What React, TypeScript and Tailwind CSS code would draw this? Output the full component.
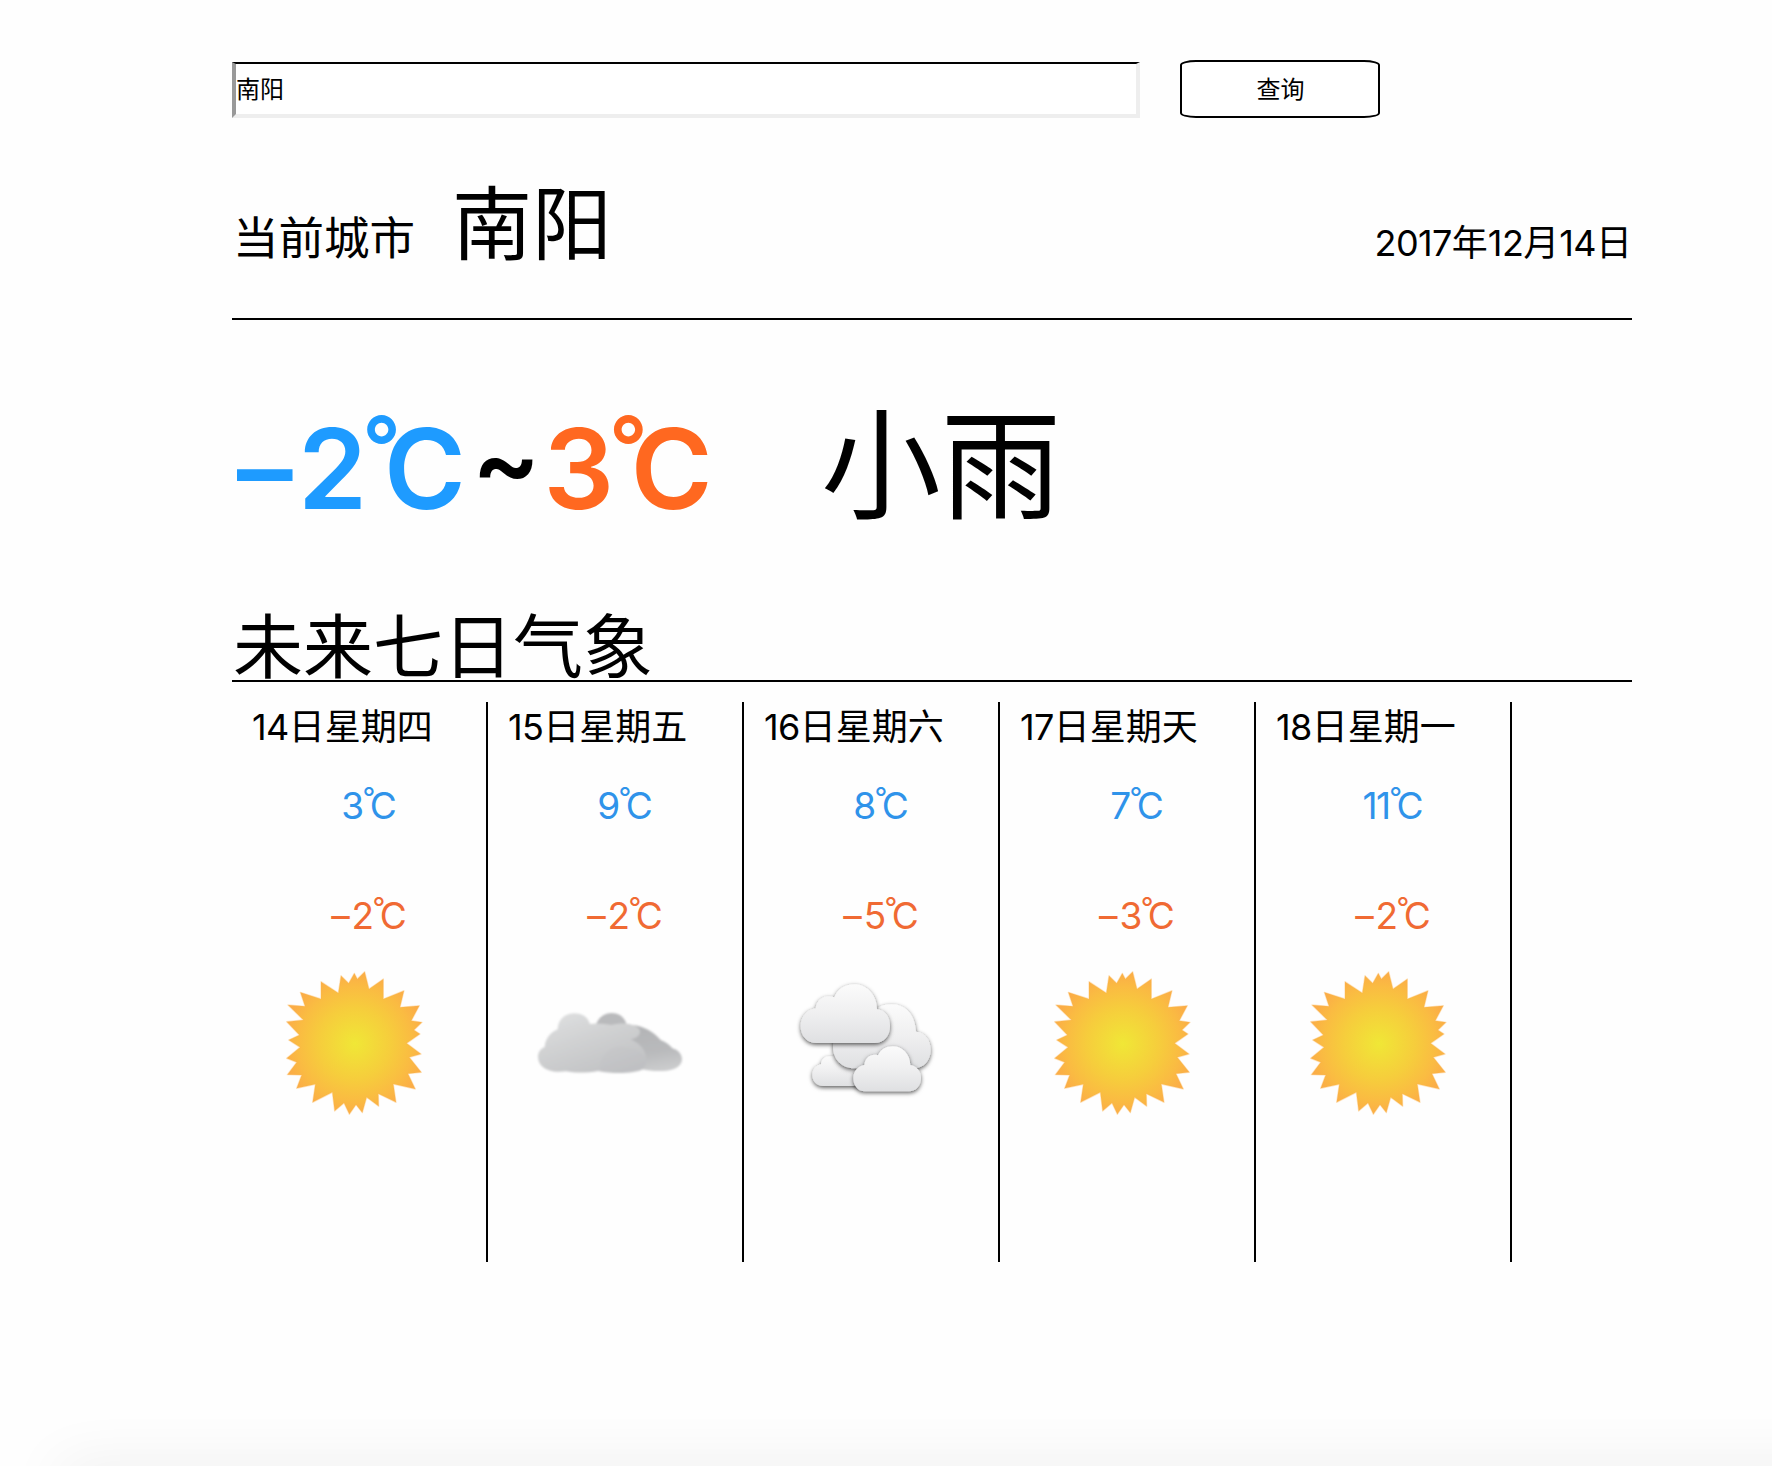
import React from 'react';

type Sky = 'sun' | 'cloudy' | 'overcast';

interface Day {
  date: string;
  week: string;
  high: string;
  low: string;
  sky: Sky;
}

const days: Day[] = [
  { date: '14', week: '日星期四', high: '3', low: '–2', sky: 'sun' },
  { date: '15', week: '日星期五', high: '9', low: '–2', sky: 'cloudy' },
  { date: '16', week: '日星期六', high: '8', low: '–5', sky: 'overcast' },
  { date: '17', week: '日星期天', high: '7', low: '–3', sky: 'sun' },
  { date: '18', week: '日星期一', high: '11', low: '–2', sky: 'sun' },
];

function Celsius({ value }: { value: string }) {
  const negative = value.startsWith('–');
  const digits = negative ? value.slice(1) : value;
  return (
    <>
      {negative && <span className="tracking-[0.05em]">–</span>}
      <span className="tracking-[-0.045em]">{digits}</span>
      <span className="inline-block -translate-y-[0.38em] text-[0.76em] leading-none tracking-[-0.2em]">°</span>
      <span>C</span>
    </>
  );
}

function SunIcon({ id }: { id: string }) {
  return (
    <svg viewBox="0 0 540 540" className="block h-[180px] w-[180px]">
      <defs>
        <radialGradient id={id} gradientUnits="userSpaceOnUse" cx="255" cy="284" r="215">
          <stop offset="0" stopColor="#f0e736" />
          <stop offset="0.5" stopColor="#f6cd3c" />
          <stop offset="0.8" stopColor="#fabb42" />
          <stop offset="1" stopColor="#fbac47" />
        </radialGradient>
      </defs>
      <path
        transform="translate(18 0)"
        fill={`url(#${id})`}
        stroke="#fbb450"
        strokeOpacity="0.35"
        strokeWidth="4"
        strokeLinejoin="round"
        d="M284 68L297 120L340 90L340 150L402 125L390 175L448 170L424 215L456 220L432 243L450 255L410 283L453 315L418 325L454 370L414 374L436 420L370 405L378 460L325 434L326 472L290 445L277 491L258 467L238 496L222 462L194 486L187 430L128 460L136 406L80 418L95 378L52 377L80 340L50 328L90 295L56 273L88 258L50 218L100 213L54 168L105 172L91 130L153 150L153 98L205 132L213 80L236 103L253 73L262 90Z"
      />
    </svg>
  );
}

function CloudyIcon({ id }: { id: string }) {
  return (
    <svg viewBox="0 0 540 540" className="block h-[180px] w-[180px]">
      <defs>
        <linearGradient id={`${id}-front`} x1="0.1" y1="0" x2="0.75" y2="1">
          <stop offset="0" stopColor="#dfe0e1" />
          <stop offset="0.45" stopColor="#d0d1d2" />
          <stop offset="1" stopColor="#c0c1c3" />
        </linearGradient>
        <linearGradient id={`${id}-back`} x1="0.3" y1="0" x2="0.5" y2="1">
          <stop offset="0" stopColor="#b3b4b6" />
          <stop offset="0.6" stopColor="#b9babc" />
          <stop offset="1" stopColor="#cbcccd" />
        </linearGradient>
        <filter id={`${id}-soft`} x="-5%" y="-5%" width="110%" height="110%">
          <feGaussianBlur stdDeviation="2.5" />
        </filter>
      </defs>
      <g transform="translate(0 91)" filter={`url(#${id}-soft)`}>
        <path fill="#b9babc" d="M228 134C238 112 254 101 275 101C296 101 312 112 319 132L300 150L240 150Z" />
        <path
          fill={`url(#${id}-back)`}
          d="M320 140C355 130 400 155 422 182C438 188 450 197 457 207C474 211 486 225 486 240C486 262 460 276 425 275C405 276 380 272 360 268L330 180Z"
        />
        <path
          fill={`url(#${id}-front)`}
          d="M54 232C54 218 62 208 74 203C76 178 92 158 113 150C114 120 136 102 163 102C187 102 204 114 210 134C232 130 255 134 275 137C305 128 345 132 358 150C365 165 352 178 332 180C362 194 378 214 378 235C380 252 378 262 368 270C345 283 280 285 235 275C200 281 165 281 138 276C95 282 54 268 54 232Z"
        />
        <path fill="#bebfc1" fillOpacity="0.2" d="M240 275C238 235 262 208 290 203C325 200 372 215 378 240C380 275 300 287 240 275Z" />
      </g>
    </svg>
  );
}

function OvercastIcon({ id }: { id: string }) {
  return (
    <svg viewBox="0 0 540 540" className="block h-[180px] w-[180px]">
      <defs>
        <linearGradient id={`${id}-fill`} x1="0" y1="0" x2="0" y2="1">
          <stop offset="0" stopColor="#fbfbfb" />
          <stop offset="0.5" stopColor="#efeff0" />
          <stop offset="1" stopColor="#dfe0e2" />
        </linearGradient>
        <filter id={`${id}-shadow`} x="-15%" y="-15%" width="130%" height="140%">
          <feDropShadow dx="0" dy="5" stdDeviation="7" floodColor="#000000" floodOpacity="0.65" />
        </filter>
      </defs>
      <g transform="translate(12 33)" fill={`url(#${id}-fill)`}>
        <path
          filter={`url(#${id}-shadow)`}
          d="M130 378C108 378 97 362 97 345C97 328 108 316 123 313C124 298 134 289 148 289C180 285 215 310 240 345L240 378Z"
        />
        <path
          filter={`url(#${id}-shadow)`}
          d="M222 325C185 325 160 298 159 262C159 230 175 205 265 190C268 155 295 133 335 133C378 133 405 165 408 215C435 217 452 240 452 270C452 300 432 325 402 325Z"
        />
        <path
          filter={`url(#${id}-shadow)`}
          d="M110 249C80 249 62 227 62 198C62 170 82 148 107 145C110 118 135 102 163 112C172 88 195 73 222 73C262 73 290 105 291 148C315 150 330 170 330 198C330 228 312 249 284 249Z"
        />
        <path
          filter={`url(#${id}-shadow)`}
          d="M255 394C232 394 220 375 220 354C220 333 234 318 253 315C255 293 273 280 294 286C302 268 318 259 338 259C367 259 390 282 391 315C410 318 423 333 423 354C423 377 408 394 387 394Z"
        />
      </g>
    </svg>
  );
}

function SkyIcon({ sky, id }: { sky: Sky; id: string }) {
  if (sky === 'sun') return <SunIcon id={id} />;
  if (sky === 'cloudy') return <CloudyIcon id={id} />;
  return <OvercastIcon id={id} />;
}

function DayColumn({ day, index }: { day: Day; index: number }) {
  return (
    <li className="h-[560px] w-64 border-r-2 border-black pl-5">
      <div className="h-[50px] whitespace-nowrap text-4xl leading-[50px]">
        <span className="tracking-[-0.6px]">{day.date}</span>
        {day.week}
      </div>
      <div className="mt-[29px] h-[50px] text-center text-[37px] leading-[50px] text-[#2f93ea]">
        <Celsius value={day.high} />
      </div>
      <div className="mt-[60px] h-[50px] text-center text-[37px] leading-[50px] text-[#f06a33]">
        <Celsius value={day.low} />
      </div>
      <div className="ml-3 mt-2">
        <SkyIcon sky={day.sky} id={`sky-${index}`} />
      </div>
    </li>
  );
}

export default function App() {
  return (
    <div className="relative h-[1466px] w-full overflow-hidden bg-[#fefefe] font-['Inter','Noto_Sans_CJK_SC',sans-serif] text-black">
      <main className="ml-[232px] w-[1400px] pt-[60px]">
        <form className="flex h-[58px] items-end gap-10" onSubmit={(e) => e.preventDefault()}>
          <input
            type="text"
            defaultValue="南阳"
            className="h-14 w-[908px] border-4 border-t-2 border-b-[#eeeeee] border-l-[#999999] border-r-[#eeeeee] border-t-black bg-white pb-[3px] text-2xl leading-none outline-none"
          />
          <button type="submit" className="h-[58px] w-[200px] rounded-[16px/5px] border-2 border-black bg-white pl-px pt-0.5 text-2xl leading-none">
            查询
          </button>
        </form>

        <header className="flex h-[202px] items-baseline border-b-2 border-black pt-[48px]">
          <span className="w-[180px] translate-y-0.5 whitespace-nowrap pl-px text-[45.5px] leading-[64px]">当前城市</span>
          <span className="ml-10 text-[80px] leading-[116px]">南阳</span>
          <time className="ml-auto translate-y-[3px] text-4xl leading-[50px]">
            <span className="tracking-[-0.6px]">2017</span>年<span className="tracking-[-0.6px]">12</span>月
            <span className="tracking-[-0.6px]">14</span>日
          </time>
        </header>

        <section className="flex h-[260px] items-baseline pt-[56px] leading-[180px]">
          <div className="w-[589px] whitespace-nowrap pl-[5px] text-[111px] font-semibold">
            <span className="text-[#1e9bff]">
              <Celsius value="–2" />
            </span>
            <span className="inline-block -translate-y-[11px] pl-1.5 text-[102px] leading-none">~</span>
            <span className="pl-[3px] text-[#ff6820]">
              <Celsius value="3" />
            </span>
          </div>
          <span className="translate-y-px text-[120px]">小雨</span>
        </section>

        <h2 className="flex h-[102px] items-end border-b-2 border-black pl-px text-[70px] leading-[65px]">未来七日气象</h2>

        <ul className="mt-5 flex">
          {days.map((day, i) => (
            <DayColumn key={day.date} day={day} index={i} />
          ))}
        </ul>
      </main>

      <div className="pointer-events-none absolute -bottom-10 left-[60px] right-[-60px] h-10 shadow-[0_0_60px_0px_rgba(0,0,0,0.075)]" />
    </div>
  );
}
